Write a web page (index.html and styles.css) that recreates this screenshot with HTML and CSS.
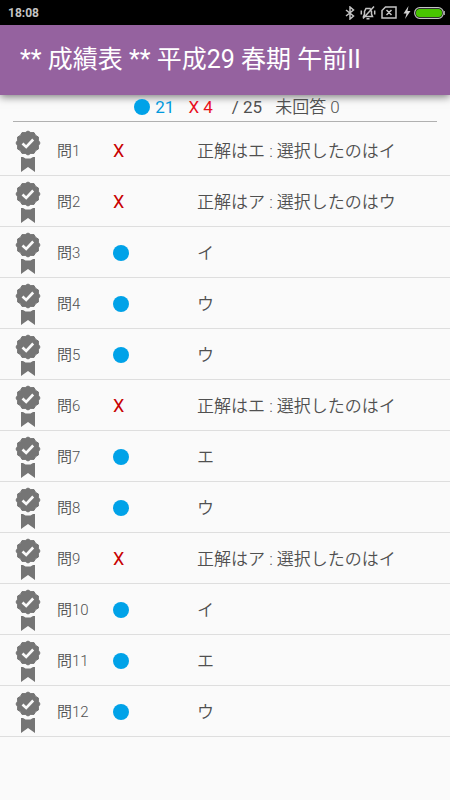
FILE: index.html
```
<!DOCTYPE html>
<html lang="ja">
<head>
<meta charset="utf-8">
<meta name="viewport" content="width=device-width, initial-scale=1">
<title>成績表</title>
<link rel="stylesheet" href="styles.css">
</head>
<body>
<div class="status-bar">
  <span class="clock">18:08</span>
  <span class="status-icons">
    <svg width="10" height="14" viewBox="0 0 10 14" fill="none" stroke="#c4c4c4" stroke-width="1.5"><path d="M1 4l7.500 6-3.500 3V1l3.500 3L1 10"/></svg>
    <svg class="icon-bell" width="16" height="14" viewBox="0 0 16 14" fill="none" stroke="#c4c4c4" stroke-width="1.500"><path d="M3.500 10.500L4.500 8V5.500L6 2.500h4l1.500 3V8l1 2.500zM6.500 12.800h3M14 .5L3 12.500M1.300 4.500v4M14.700 4.500v4"/></svg>
    <svg class="icon-sim" width="16" height="13" viewBox="0 0 16 13" fill="none" stroke="#c4c4c4" stroke-width="1.500"><path d="M4.500 1H15v11H1V4.500zM5.500 4l5 5M10.500 4l-5 5"/></svg>
    <svg class="icon-bolt" width="8" height="13" viewBox="0 0 8 13" fill="#d0d0d0"><path d="M5.500 0L0.500 7.500h3L2 13l5.500-8h-3z"/></svg>
    <svg width="31" height="12" viewBox="0 0 31 12"><rect x="0.700" y="0.700" width="28.600" height="10.600" rx="5" fill="none" stroke="#c4c4c4" stroke-width="1.200"/><rect x="2" y="2" width="26" height="8" rx="3.500" fill="#48c400"/><path d="M30.300 4v4" stroke="#c4c4c4"/></svg>
  </span>
</div>
<header class="app-bar">
  <h1>** 成績表 ** 平成29 春期 午前II</h1>
</header>
<svg class="symbols" aria-hidden="true">
  <symbol id="badge" viewBox="0 0 26 42">
    <path fill="#757575" d="M13 1l2.800 1.600 3.200 0 1.600 2.800 2.800 1.600 0 3.200 1.600 2.800-1.600 2.800 0 3.200-2.800 1.600-1.600 2.800-3.200 0L13 25l-2.800-1.600-3.200 0-1.600-2.800-2.800-1.600 0-3.200L1 13l1.600-2.800 0-3.200 2.800-1.600L7 2.600l3.200 0z" stroke="#757575" stroke-width="1" stroke-linejoin="round"/>
    <path fill="none" stroke="#fafafa" stroke-width="2.600" d="M7.500 13.500l3.700 3.500 7-7.500"/>
    <path fill="#757575" d="M6 27h2l2.500 1.500h5L18 27h2v15l-7-5-7 5z"/>
  </symbol>
</svg>
<main>
  <p class="summary">
    <span class="correct"><i class="dot"></i>21</span>
    <span class="wrong">X 4</span>
    <span>/ 25</span>
    <span class="unanswered">未回答 0</span>
  </p>
  <table class="results">
    <tbody>
      <tr><td class="medal"><svg><use href="#badge"/></svg></td><th scope="row">問1</th><td class="mark">X</td><td>正解はエ : 選択したのはイ</td></tr>
      <tr><td class="medal"><svg><use href="#badge"/></svg></td><th scope="row">問2</th><td class="mark">X</td><td>正解はア : 選択したのはウ</td></tr>
      <tr><td class="medal"><svg><use href="#badge"/></svg></td><th scope="row">問3</th><td class="mark"><i class="dot"></i></td><td>イ</td></tr>
      <tr><td class="medal"><svg><use href="#badge"/></svg></td><th scope="row">問4</th><td class="mark"><i class="dot"></i></td><td>ウ</td></tr>
      <tr><td class="medal"><svg><use href="#badge"/></svg></td><th scope="row">問5</th><td class="mark"><i class="dot"></i></td><td>ウ</td></tr>
      <tr><td class="medal"><svg><use href="#badge"/></svg></td><th scope="row">問6</th><td class="mark">X</td><td>正解はエ : 選択したのはイ</td></tr>
      <tr><td class="medal"><svg><use href="#badge"/></svg></td><th scope="row">問7</th><td class="mark"><i class="dot"></i></td><td>エ</td></tr>
      <tr><td class="medal"><svg><use href="#badge"/></svg></td><th scope="row">問8</th><td class="mark"><i class="dot"></i></td><td>ウ</td></tr>
      <tr><td class="medal"><svg><use href="#badge"/></svg></td><th scope="row">問9</th><td class="mark">X</td><td>正解はア : 選択したのはイ</td></tr>
      <tr><td class="medal"><svg><use href="#badge"/></svg></td><th scope="row">問10</th><td class="mark"><i class="dot"></i></td><td>イ</td></tr>
      <tr><td class="medal"><svg><use href="#badge"/></svg></td><th scope="row">問11</th><td class="mark"><i class="dot"></i></td><td>エ</td></tr>
      <tr><td class="medal"><svg><use href="#badge"/></svg></td><th scope="row">問12</th><td class="mark"><i class="dot"></i></td><td>ウ</td></tr>
    </tbody>
  </table>
</main>
</body>
</html>
```
FILE: styles.css
```
* { box-sizing: border-box; }
body {
  margin: 0;
  background: #fafafa;
  color: #505050;
  font: 350 17px/24px Roboto, "Noto Sans CJK JP", sans-serif;
}
.status-bar {
  display: flex;
  align-items: center;
  justify-content: space-between;
  height: 25px;
  padding: 0 5px 0 8px;
  background: #000;
}
.clock {
  color: #c4c4c4;
  font-size: 12px;
  font-weight: 700;
}
.status-icons {
  display: flex;
  align-items: center;
}
.icon-bell { margin-left: 5px; }
.icon-sim { margin-left: 5px; }
.icon-bolt { margin: 0 3px 0 6px; }
.app-bar {
  display: flex;
  align-items: center;
  height: 70px;
  padding: 0 20px;
  background: #95629f;
  box-shadow: 0 2px 8px rgba(0, 0, 0, 0.5);
}
.app-bar h1 {
  margin: 0;
  color: #fff;
  font-size: 25px;
  line-height: 32px;
  font-weight: 400;
  white-space: nowrap;
}
.symbols { display: none; }
.summary {
  display: flex;
  justify-content: center;
  margin: 0 13px 3px;
  padding: 0 0 2px 24px;
  border-bottom: 1px solid #b0b0b0;
  font-weight: 400;
}
.correct {
  display: flex;
  align-items: center;
  gap: 5px;
  color: #0099dd;
}
.wrong {
  margin: 0 19px 0 14px;
  color: #e8101c;
}
.unanswered {
  margin-left: 13px;
  font-weight: 350;
}
.dot {
  display: block;
  width: 16px;
  height: 16px;
  border-radius: 50%;
  background: #00a2e8;
}
.results {
  width: 100%;
  border-collapse: separate;
  border-spacing: 0;
  table-layout: fixed;
}
.results td,
.results th {
  height: 51px;
  padding: 2px 0 0;
  border-bottom: 1px solid #dedede;
  text-align: left;
  vertical-align: middle;
}
.results th {
  width: 56px;
  font-size: 15px;
  font-weight: 350;
}
.results .medal {
  width: 57px;
  padding-left: 15px;
}
.medal svg {
  display: block;
  width: 26px;
  height: 42px;
}
.results .mark {
  width: 84px;
  color: #c80000;
  font-size: 18px;
  font-weight: 400;
}
```
